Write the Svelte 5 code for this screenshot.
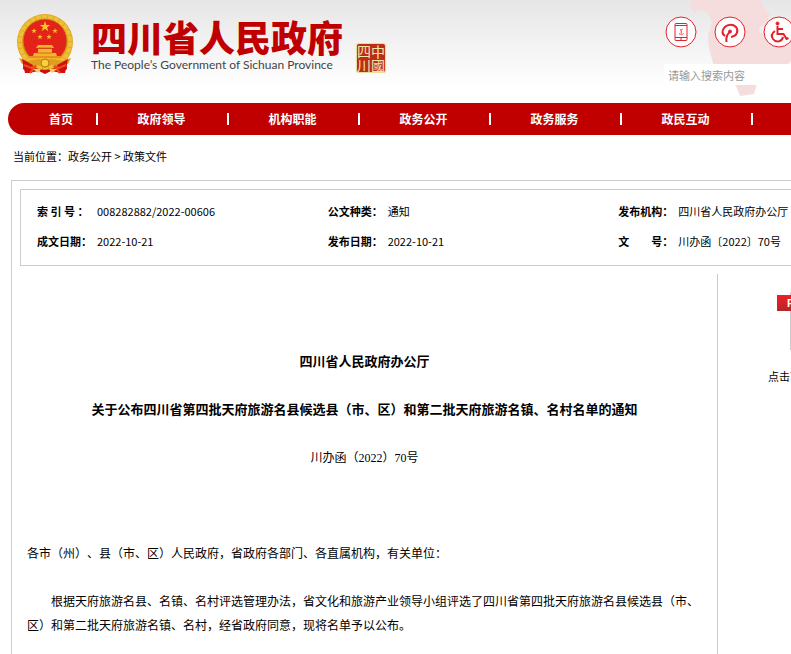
<script>
    const navItems = ['首页', '政府领导', '机构职能', '政务公开', '政务服务', '政民互动', '数据']

    const info = [
        { label: '索 引 号 ：', value: '008282882/2022-00606' },
        { label: '公文种类：', value: '通知' },
        { label: '发布机构：', value: '四川省人民政府办公厅' },
        { label: '成文日期：', value: '2022-10-21' },
        { label: '发布日期：', value: '2022-10-21' },
        { label: '文　　号：', value: '川办函〔2022〕70号' }
    ]

    let keyword = ''
</script>

<div class="page">
    <header>
        <svg class="map" viewBox="0 0 150 100" aria-hidden="true">
            <path d="M0 0H71L74 8 79 13 78 22 70 27 69 32 78 35 90 34 101 39 112 48 104 58 92 70 76 80 67 84 64 94 50 96 46 86 40 80 30 72 23 63 19 48 18 36 22 22 18 13 11 10 5 13 0 8Z" />
        </svg>
        <a class="logo" href="/">
            <svg class="emblem" width="58" height="62" viewBox="0 0 58 62" aria-hidden="true">
                <path d="M8 41 7 56 12 60 23 58 29 61 35 58 46 60 51 56 50 41Z" fill="#c90d0b" />
                <circle cx="29" cy="29" r="28" fill="#e3a91e" />
                <circle cx="29" cy="29" r="25" fill="none" stroke="#eec03a" stroke-width="4" stroke-dasharray="5 1" />
                <circle cx="29" cy="28" r="22" fill="#e32219" stroke="#c88b13" />
                <path d="m29 8 1.3 3.9h4l-3.2 2.4 1.2 3.9-3.3-2.4-3.3 2.4 1.2-3.9-3.2-2.4h4z" fill="#f9c928" />
                <path id="star" d="m18 15 .7 2h2.2l-1.8 1.3.7 2.1-1.8-1.3-1.8 1.3.7-2.1-1.8-1.3h2.2z" fill="#f9b82b" />
                <use href="#star" x="21" />
                <use href="#star" x="6" y="6" />
                <use href="#star" x="15" y="6" />
                <path d="m20 35 2-3h14l2 3zm2 1h14v4H22zm-4 4h22l1 3H17zm-5 3h32v5H13z" fill="#f3b52c" />
                <path d="M22 35h14M21 40h16M13 44h32" stroke="#d66c19" fill="none" />
                <path d="m3 45 9 3 10-2 7 1 7-1 10 2 9-3-3 6-9 3-7-2-7 3-7-3-7 2-9-3z" fill="#df9e1d" />
                <path d="m6 46 3 14 7 0 1-8zm46 0-3 14-7 0-1-8z" fill="#cf1210" />
                <path d="m8 52 7 3 5-2-6 7m36-8-7 3-5-2 6 7" stroke="#ed4b20" stroke-width="2" fill="none" />
                <path d="M17 56h8l-3 4zm16 0h8l-5 4z" fill="#f6cf68" />
                <circle cx="29" cy="50" r="4" fill="#f9cf40" stroke="#b77a0e" />
            </svg>
            <span class="names">
                <span class="name">四川省人民政府</span>
                <span class="name-en">The People’s Government of Sichuan Province</span>
            </span>
            <span class="seal"><span>四</span><span>中</span><span>川</span><span>國</span></span>
        </a>
        <div class="tools">
            <div class="links">
                <a href="/app" aria-label="手机版">
                    <svg viewBox="0 0 32 32">
                        <circle cx="16" cy="16" r="15" />
                        <rect x="10" y="7.500" width="12" height="17" rx="1" />
                        <path d="M10 9.500h12M10 21.500h12M15 23h2" />
                        <path d="m18 13-3 1 2 2-3 2 3 1 2-2m-3-4 1 6" stroke-width=".5" />
                    </svg>
                </a>
                <a href="/media" aria-label="政务新媒体">
                    <svg viewBox="0 0 32 32">
                        <circle cx="16" cy="16" r="15" />
                        <path class="thick" d="M11 20c-3-2-3-5-1-8 3-4 9-4 12-1 3 4 1 9-5 10M12.500 26c-.500-4 .500-8 3.500-10" />
                        <circle class="solid" cx="16" cy="15.500" r="1.500" />
                    </svg>
                </a>
                <a href="/accessible" aria-label="无障碍">
                    <svg viewBox="0 0 32 32">
                        <circle cx="16" cy="16" r="15" />
                        <circle class="solid" cx="14.500" cy="7.500" r="1.500" />
                        <path class="thick" d="M14.500 10v8h6l3 5 2-1M15 13h5M12 15c-3 2-4 5-2 8 3 4 9 3 10-2" />
                    </svg>
                </a>
            </div>
            <input type="text" aria-label="搜索" placeholder="请输入搜索内容" bind:value={keyword} />
        </div>
    </header>

    <nav>
        {#each navItems as item}
            <a href="/">{item}</a>
        {/each}
    </nav>

    <div class="crumbs">当前位置：<a href="/">政务公开</a> &gt; <a href="/">政策文件</a></div>

    <main>
        <dl class="info">
            {#each info as row}
                <div>
                    <dt>{row.label}</dt>
                    <dd>{row.value}</dd>
                </div>
            {/each}
        </dl>

        <div class="columns">
            <article>
                <h1>四川省人民政府办公厅</h1>
                <h1>关于公布四川省第四批天府旅游名县候选县（市、区）和第二批天府旅游名镇、名村名单的通知</h1>
                <p class="number">川办函（2022）70号</p>
                <p>各市（州）、县（市、区）人民政府，省政府各部门、各直属机构，有关单位：</p>
                <p class="indent">根据天府旅游名县、名镇、名村评选管理办法，省文化和旅游产业领导小组评选了四川省第四批天府旅游名县候选县（市、区）和第二批天府旅游名镇、名村，经省政府同意，现将名单予以公布。</p>
            </article>
            <aside>
                <a href="/download">
                    <span class="file"><b>PDF</b></span>
                    点击下载文件
                </a>
            </aside>
        </div>
    </main>
</div>

<style>
    :global(body) {
        overflow-x: hidden;
        background: #fff;
    }

    .page {
        min-width: 930px;
        color: #000;
        font: 11px/20px "Noto Sans CJK SC", sans-serif;
        text-spacing-trim: space-all;
    }

    a {
        color: inherit;
        text-decoration: none;
    }

    header {
        position: relative;
        display: flex;
        justify-content: space-between;
        height: 103px;
        background: linear-gradient(#e6e6e6, #fff 88px);
    }

    .map {
        position: absolute;
        top: 0;
        right: 90px;
        width: 150px;
        height: 100px;
        fill: #f5dddd;
    }

    .logo {
        display: flex;
        align-items: flex-start;
        padding: 13px 0 0 16px;
    }

    .names {
        display: flex;
        flex-direction: column;
        margin: 3px 13px 0 17px;
    }

    .name {
        color: #c00000;
        font-size: 36px;
        font-weight: 900;
        line-height: 40px;
    }

    .name-en {
        color: #444;
        font: 12px/18px Lato, sans-serif;
    }

    .seal {
        display: grid;
        grid-template-columns: 14px 14px;
        margin-top: 30px;
        border: 1px solid #e9dc9c;
        border-radius: 3px;
        box-shadow: 0 0 2px #f5efae;
        background: #b92d1c;
        color: #f8e5a2;
        font-size: 14px;
        line-height: 14px;
        text-align: center;
    }

    .tools {
        position: relative;
        width: 266px;
        padding-top: 16px;
    }

    .links {
        display: flex;
        gap: 17px;
        padding-left: 1px;
    }

    .links svg {
        display: block;
        width: 32px;
        height: 32px;
        fill: none;
        stroke: #e5202a;
    }

    .links svg > circle:first-child {
        fill: #fff;
    }

    .links .thick {
        stroke-width: 2;
    }

    .links .solid {
        fill: #e5202a;
    }

    input {
        display: block;
        width: 230px;
        height: 21px;
        margin-top: 16px;
        padding: 0 4px;
        border: 0;
        background: #fff;
        font: inherit;
        line-height: 16px;
    }

    input::placeholder {
        color: #999;
    }

    nav {
        display: flex;
        overflow: hidden;
        height: 32px;
        margin: 0 8px;
        padding-left: 18px;
        border-radius: 16px;
        background: #c00000;
        color: #fff;
        font-size: 12px;
        font-weight: bold;
        line-height: 32px;
        text-align: center;
    }

    nav a {
        display: flex;
        flex: 0 0 131px;
        align-items: center;
        justify-content: center;
    }

    nav a:first-child {
        flex-basis: 70px;
    }

    nav a + a::before {
        content: '';
        width: 2px;
        height: 12px;
        margin-right: auto;
        background: #fff;
    }

    nav a + a::after {
        content: '';
        width: 2px;
        margin-left: auto;
    }

    .crumbs {
        padding: 11px 13px 14px;
    }

    main {
        margin: 0 11px;
        border: 1px solid #ccc;
        border-bottom: 0;
    }

    .info {
        display: grid;
        grid-template-columns: repeat(3, 1fr);
        row-gap: 10px;
        margin: 8px;
        padding: 11px 0 14px 16px;
        border: 1px solid #ccc;
    }

    .info div {
        display: flex;
    }

    dt {
        min-width: 60px;
        font-weight: bold;
        white-space: pre;
    }

    dd {
        margin: 0;
    }

    .columns {
        display: flex;
    }

    article {
        flex: 1;
        min-height: 310px;
        padding: 76px 15px 0;
        border-right: 1px solid #ccc;
        font: 12px/24px "Liberation Serif", "Noto Sans CJK SC", serif;
    }

    h1,
    p {
        margin: 0 0 24px;
    }

    h1 {
        font-size: 13px;
        line-height: 24px;
        text-align: center;
    }

    .number {
        margin-bottom: 72px;
        text-align: center;
    }

    .indent {
        text-indent: 2em;
    }

    aside {
        flex: 0 0 150px;
        padding: 18px 0 0 50px;
    }

    aside a {
        display: block;
    }

    .file {
        display: block;
        width: 50px;
        height: 56px;
        margin: 0 0 16px 22px;
        border: 1px solid #ccc;
        border-top-color: #eee;
    }

    .file b {
        display: block;
        width: 36px;
        margin: 2px 0 0 -14px;
        padding-left: 10px;
        background: linear-gradient(#ef2025, #b5262a);
        color: #fff;
        font: bold 11px/16px "Liberation Sans", sans-serif;
    }
</style>
